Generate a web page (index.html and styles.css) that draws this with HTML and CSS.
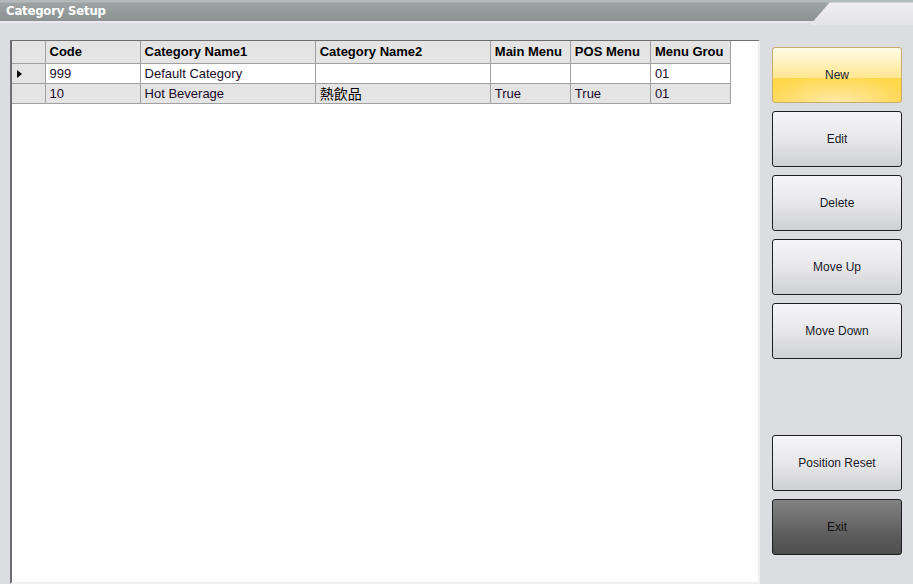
FILE: index.html
```html
<!DOCTYPE html>
<html lang="en">
  <head>
    <meta charset="utf-8" />
    <title>Category Setup</title>
    <link rel="stylesheet" href="styles.css">
  </head>
  <body>
    <div class="titlebar">
      <div class="title">Category Setup</div>
      <div class="tab"></div>
    </div>
    <div class="main">
      <div class="grid-box">
        <table class="grid">
          <tr class="head">
            <th class="rowhead"></th>
            <th class="c-code">Code</th>
            <th class="c-name">Category Name1</th>
            <th class="c-name">Category Name2</th>
            <th class="c-menu">Main Menu</th>
            <th class="c-menu">POS Menu</th>
            <th class="c-menu">Menu Grou</th>
          </tr>
          <tr>
            <td class="rowhead"><span class="arrow"></span></td>
            <td>999</td>
            <td>Default Category</td>
            <td></td>
            <td></td>
            <td></td>
            <td>01</td>
          </tr>
          <tr class="alt">
            <td class="rowhead"></td>
            <td>10</td>
            <td>Hot Beverage</td>
            <td class="cjk">熱飲品</td>
            <td>True</td>
            <td>True</td>
            <td>01</td>
          </tr>
        </table>
      </div>
      <div class="side">
        <button class="btn btn-new">New</button>
        <button class="btn">Edit</button>
        <button class="btn">Delete</button>
        <button class="btn">Move Up</button>
        <button class="btn">Move Down</button>
        <div class="spacer"></div>
        <button class="btn">Position Reset</button>
        <button class="btn btn-exit">Exit</button>
      </div>
    </div>
  </body>
</html>
```

FILE: styles.css
```css
* {
  margin: 0;
  padding: 0;
  box-sizing: border-box;
}
body {
  width: 913px;
  height: 584px;
  overflow: hidden;
  background-color: #dcdde1;
  font-family: "Liberation Sans", Arial, sans-serif;
}
.titlebar {
  height: 23px;
  display: flex;
  position: relative;
  background: linear-gradient(#b4b9b9 0, #b4b9b9 2px, #9ea3a4 3px, #8d9293 20px);
  border-bottom: 2px solid #eae8ee;
}
.title {
  flex: 1;
  color: #ffffff;
  font-family: "DejaVu Sans Condensed", "DejaVu Sans", sans-serif;
  font-weight: bold;
  font-size: 13px;
  line-height: 22px;
  padding-left: 6px;
  letter-spacing: -0.2px;
}
.tab {
  position: absolute;
  top: 2px;
  right: 0;
  width: 103px;
  height: 23px;
  background: linear-gradient(#eeedf1, #e3e3e7);
  clip-path: polygon(20px 0, 100% 0, 100% 100%, 0 100%);
  border-top: 1px solid #d8d4de;
}
.main {
  display: flex;
  padding: 17px 0 0 10px;
  height: 561px;
}
.grid-box {
  width: 750px;
  height: 544px;
  background-color: #ffffff;
  border-top: 1px solid #6e6e6e;
  border-left: 2px solid #6e6e6e;
  border-right: 2px solid #efefef;
  border-bottom: 2px solid #efefef;
}
.grid {
  border-collapse: collapse;
  table-layout: fixed;
  width: 719px;
  font-size: 13px;
  color: #1a0a2a;
}
.grid th,
.grid td {
  border: 1px solid #a0a0a0;
  text-align: left;
  padding: 0 4px;
  white-space: nowrap;
  overflow: hidden;
  line-height: 16px;
}
.grid th {
  height: 22px;
  background-color: #e4e4e4;
  font-weight: bold;
  color: #000000;
  border-top: none;
}
.grid td {
  height: 20px;
  padding-top: 2px;
  vertical-align: middle;
}
.grid tr.alt td {
  background-color: #e4e4e4;
}
.grid .rowhead {
  width: 33px;
  background-color: #e4e4e4;
  border-left: none;
}
.c-code {
  width: 95px;
}
.c-name {
  width: 175px;
}
.c-menu {
  width: 80px;
}
.grid td.cjk {
  font-family: "Noto Sans CJK TC", sans-serif;
  font-size: 14px;
  line-height: 16px;
  padding-top: 0;
  overflow: visible;
  color: #000000;
}
.arrow {
  display: block;
  width: 0;
  height: 0;
  margin-left: 1px;
  border-top: 4px solid transparent;
  border-bottom: 4px solid transparent;
  border-left: 5px solid #000000;
}
.side {
  display: flex;
  flex-direction: column;
  gap: 8px;
  padding: 7px 0 0 12px;
}
.spacer {
  height: 60px;
}
.btn {
  width: 130px;
  height: 56px;
  flex-shrink: 0;
  border: 1px solid #1e1e1e;
  border-radius: 3px;
  background: linear-gradient(#f6f6f9, #e7e7ea 50%, #cfd0d3);
  font-family: "Liberation Sans", Arial, sans-serif;
  font-size: 12px;
  color: #1a1a2a;
}
.btn-new {
  border-color: #c8ad6e;
  background:
    radial-gradient(ellipse 60% 50% at 50% 100%, #ffe9a8, rgba(255, 233, 168, 0)),
    linear-gradient(#fffbe8 0, #ffe690 55%, #ffd84a 56%, #ffd64a 100%);
}
.btn-exit {
  background: linear-gradient(#828282, #5a5a5a 70%, #4f4f4f);
  color: #111111;
}
```
